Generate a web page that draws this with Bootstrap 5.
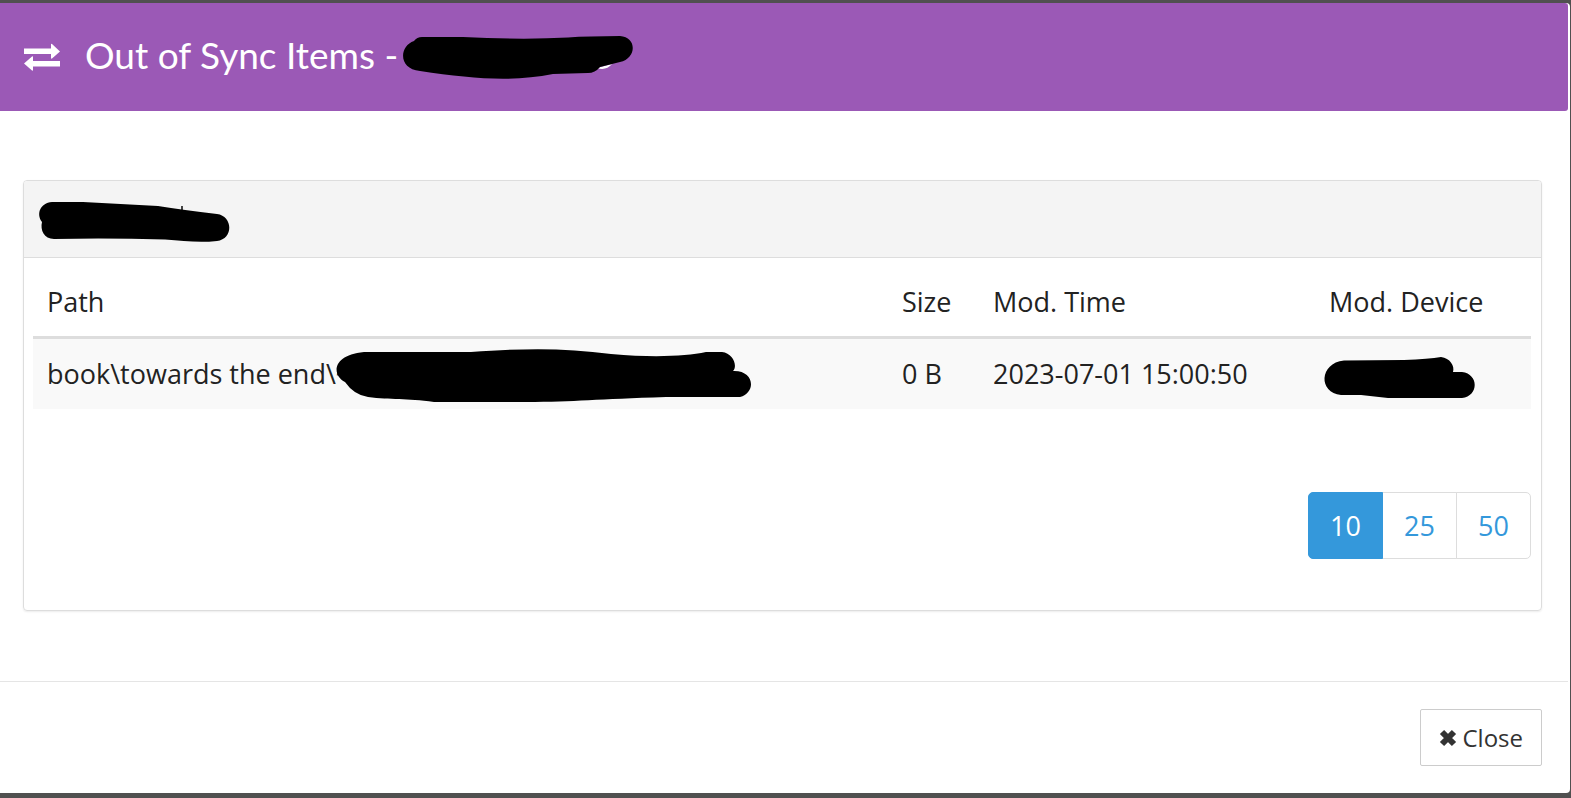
<!DOCTYPE html>
<html lang="en">
<head>
<meta charset="utf-8">
<meta name="viewport" content="width=device-width, initial-scale=1">
<title>Out of Sync Items</title>
<link href="https://cdn.jsdelivr.net/npm/bootstrap@5.3.0/dist/css/bootstrap.min.css" rel="stylesheet">
<style>
body{background:#505050;font-family:"Open Sans","Noto Sans",sans-serif;font-size:27px;line-height:40px;color:#222}
.sync-dialog{margin:3px 1px 5px 0;background:#fff;border-radius:0 4px 4px 0}
.sync-head{background:#9b59b6;color:#fff;height:108px;margin-right:2px;padding:0 24px 0 23px;border-radius:0 3px 3px 0}
.sync-title{font-family:Lato,sans-serif;font-size:37px;line-height:44px;font-weight:400;padding-bottom:4px}
.sync-icon{margin-right:24px}
.sync-body{padding:69px 28px 70px 23px}
.sync-panel{border:1px solid #ddd;border-radius:4px;box-shadow:0 1px 2px rgba(0,0,0,.08)}
.sync-panel-head{background:#f4f4f4;border-bottom:1px solid #ddd;height:77px;padding:6px 15px 0;border-radius:3px 3px 0 0}
.sync-panel-body{padding:10px 10px 51px 9px}
.sync-table{table-layout:fixed;color:#222;margin-bottom:83px;--bs-table-color:#222;--bs-table-striped-color:#222;--bs-table-striped-bg:#f9f9f9}
.sync-table th,.sync-table td{padding:14px;font-weight:400;border:0}
.sync-table thead th{border-bottom:3px solid #ddd}
.sync-table tbody td{padding-top:15px;padding-bottom:15px}
.col-size{width:91px}
.col-time{width:336px}
.col-device{width:216px}
.redact{display:block;flex:none;overflow:visible}
.redact-title{margin:2px 0 0 5px}
.redact-path{margin:-5px 0 -9px -15px}
.redact-device{margin:3px 0 -4px -5px}
.sync-pages{--bs-pagination-font-size:27px;--bs-pagination-padding-x:20px;--bs-pagination-padding-y:13px;--bs-pagination-color:#3498db;--bs-pagination-border-color:#ddd;--bs-pagination-border-radius:5px;--bs-pagination-active-bg:#3498db;--bs-pagination-active-border-color:#3498db}
.sync-pages .page-link{width:75px;line-height:39px;text-align:center}
.sync-foot{border-top:1px solid #e5e5e5;margin-right:2px;padding:27px 26px}
.sync-close{--bs-btn-font-size:24px;--bs-btn-line-height:35px;--bs-btn-padding-x:18px;--bs-btn-padding-y:10px;--bs-btn-border-color:#ccc;--bs-btn-border-radius:2px;--bs-btn-color:#333;--bs-btn-bg:#fff;gap:5px}
</style>
</head>
<body>
<main class="sync-dialog" role="dialog" aria-labelledby="dialog-title">
  <header class="sync-head d-flex align-items-center">
    <svg class="sync-icon" width="38" height="28" viewBox="0 0 38 28" fill="#fff" aria-hidden="true"><path d="M1 5.500H28V1.500Q28 .5 29 1L37 8.500L29 15.500Q28 16 28 15V11H1ZM37 23.500H10V27Q10 28 9 27.500L1 20.500L9 13.500Q10 13 10 14V18H37Z"/></svg>
    <h1 class="sync-title mb-0" id="dialog-title">Out of Sync Items -</h1>
    <svg class="redact redact-title" width="230" height="44" viewBox="0 0 230 44" aria-hidden="true"><path d="M194 32Q203 35 209 28Z" fill="#fff"/><path d="M19 1H60Q120 4 165 1.500Q185 0 217 0C234 1 234 22 217 26L197 31Q192 37 185 37L150 38C110 46 70 43 17 35C-5 33 -4 10 11 5Q14 1 19 1Z"/></svg>
  </header>
  <div class="sync-body">
    <section class="sync-panel">
      <div class="sync-panel-head d-flex align-items-center">
        <svg class="redact" width="191" height="42" viewBox="0 0 191 42" aria-hidden="true"><path d="M142 5H144V10H142Z" fill="#444"/><path d="M13 1H44L119 5Q144 9 178 13C194 15 195 38 178 40C160 42 145 40 126 38.500Q70 37 15 38C5 38 1 29 3 21C-3 13 1 2 13 1Z"/></svg>
      </div>
      <div class="sync-panel-body">
        <table class="table table-striped sync-table">
          <colgroup><col><col class="col-size"><col class="col-time"><col class="col-device"></colgroup>
          <thead><tr><th scope="col">Path</th><th scope="col">Size</th><th scope="col">Mod. Time</th><th scope="col">Mod. Device</th></tr></thead>
          <tbody>
            <tr>
              <td><div class="d-flex text-nowrap">book\towards the end\~<svg class="redact redact-path" width="416" height="54" viewBox="0 0 416 54" aria-hidden="true"><path d="M28 3L135 3C190-1 230-1 275 5C320 9 350 7 370 3H386C397 4 402 17 397 22C418 21 421 43 404 48L330 48C260 50 240 53 190 53H98C70 49 55 51 32 48Q18 46 9 33C-4 27-5 6 28 3Z"/></svg></div></td>
              <td>0 B</td>
              <td class="text-nowrap">2023-07-01 15:00:50</td>
              <td><svg class="redact redact-device" width="151" height="41" viewBox="0 0 151 41" aria-hidden="true"><path d="M20 3.500L80 3Q105 2 117 0C126 1 131 9 129 15H138C155 17 155 39 138 41H64L37 38H17C-6 36-5 6 20 3.500Z"/></svg></td>
            </tr>
          </tbody>
        </table>
        <nav aria-label="Items per page">
          <ul class="pagination sync-pages justify-content-end mb-0">
            <li class="page-item active"><a class="page-link" href="#" aria-current="page">10</a></li>
            <li class="page-item"><a class="page-link" href="#">25</a></li>
            <li class="page-item"><a class="page-link" href="#">50</a></li>
          </ul>
        </nav>
      </div>
    </section>
  </div>
  <footer class="sync-foot d-flex justify-content-end">
    <button type="button" class="btn sync-close d-flex align-items-center"><svg width="18" height="18" viewBox="0 0 18 18" aria-hidden="true"><path d="M3 3L15 15M15 3L3 15" stroke="#333" stroke-width="6"/></svg>Close</button>
  </footer>
</main>
<script src="https://cdn.jsdelivr.net/npm/bootstrap@5.3.0/dist/js/bootstrap.bundle.min.js"></script>
</body>
</html>
